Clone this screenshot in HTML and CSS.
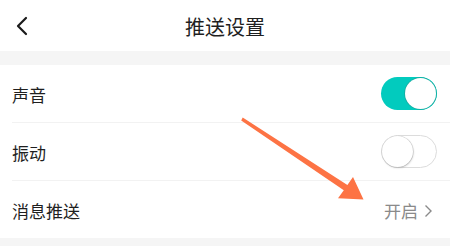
FILE: index.html
```html
<!DOCTYPE html>
<html lang="zh">
<head>
<meta charset="utf-8">
<link rel="stylesheet" href="styles.css">
</head>
<body>
<div class="page">
  <header class="nav">
    <svg class="back" width="14" height="20" viewBox="0 0 14 20"><path d="M11 2 L3 10 L11 18" fill="none" stroke="#1a1a1a" stroke-width="2.2" stroke-linecap="round" stroke-linejoin="round"/></svg>
    <h1 class="title">推送设置</h1>
  </header>
  <div class="gap"></div>
  <section class="list">
    <div class="row">
      <span class="label">声音</span>
      <span class="switch on"><span class="knob"></span></span>
    </div>
    <div class="row">
      <span class="label">振动</span>
      <span class="switch off"><span class="knob"></span></span>
    </div>
    <div class="row">
      <span class="label">消息推送</span>
      <span class="value">开启<svg class="chev" width="9" height="14" viewBox="0 0 9 14"><path d="M1.5 1.5 L7 7 L1.5 12.5" fill="none" stroke="#8a8a8a" stroke-width="1.4"/></svg></span>
    </div>
  </section>
  <div class="gap bottom"></div>
  <svg class="arrow" width="450" height="246" viewBox="0 0 450 246"><polygon points="242.7,117.6 347.4,185 353,177 363.5,199.5 338,198.2 343.8,190.2 241.2,120.4" fill="#fd7344"/></svg>
</div>
</body>
</html>
```
FILE: styles.css
```css
html, body { margin: 0; padding: 0; }
body {
  width: 450px;
  height: 246px;
  overflow: hidden;
  background: #fff;
  font-family: "Noto Sans CJK SC", "Noto Sans", sans-serif;
  color: #1f1f1f;
}
.page { position: relative; width: 450px; height: 246px; }
.nav {
  height: 51px;
  display: flex;
  align-items: center;
  justify-content: center;
  position: relative;
}
.back { position: absolute; left: 15px; top: 16px; }
.title {
  margin: 0;
  font-size: 20px;
  font-weight: 400;
  color: #1f1f1f;
  line-height: 1;
  margin-top: 2px;
}
.gap { height: 14px; background: #f5f5f5; }
.gap.bottom { height: 8px; }
.list { display: flex; flex-direction: column; }
.row {
  height: 57px;
  margin-left: 12px;
  padding-right: 13px;
  display: flex;
  align-items: center;
  justify-content: space-between;
  border-bottom: 1px solid #f2f2f2;
}
.row:last-child { border-bottom: none; }
.label { font-size: 17px; color: #1f1f1f; margin-top: 1px; }
.switch {
  width: 56px;
  height: 33px;
  border-radius: 17px;
  box-sizing: border-box;
  position: relative;
  display: block;
}
.switch.on { background: #02cbbe; margin-top: -1px; }
.switch.on .knob {
  position: absolute;
  right: 1px; top: 1px;
  width: 31px; height: 31px;
  border-radius: 50%;
  background: #fff;
  box-shadow: 0 0 0 0.8px #18a99e;
}
.switch.off { background: #fff; border: 1.5px solid #dcdcdc; }
.switch.off .knob {
  position: absolute;
  left: -0.5px; top: -0.5px;
  width: 31px; height: 31px;
  border-radius: 50%;
  background: #fff;
  box-shadow: 0.5px 1px 2px rgba(0,0,0,0.18), 0 0 0 0.6px #d6d6d6;
}
.value {
  font-size: 17px;
  color: #8a8a8a;
  display: flex;
  align-items: center;
  gap: 6px;
  margin-right: 4px;
  margin-top: 2px;
}
.arrow { position: absolute; left: 0; top: 0; pointer-events: none; }
```
